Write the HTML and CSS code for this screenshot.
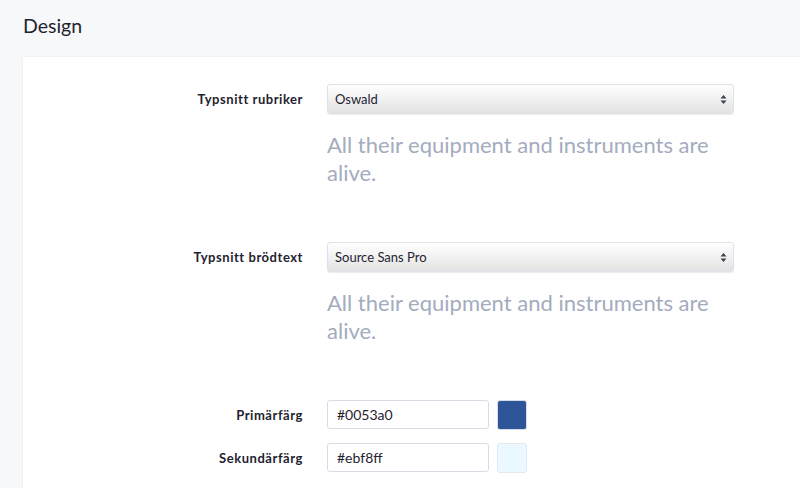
FILE: index.html
```html
<!DOCTYPE html>
<html lang="sv">
<head>
    <meta charset="UTF-8">
    <title>Design</title>
    <link rel="stylesheet" href="styles.css">
</head>
<body>
    <h1 class="page-title">Design</h1>
    <div class="card">
        <div class="form-group">
            <label class="form-label">Typsnitt rubriker</label>
            <div class="form-control">
                <div class="select">
                    <span>Oswald</span>
                    <svg class="select-arrow" width="7" height="11" viewBox="0 0 7 11"><path d="M3.5 1 L6.5 4.5 H0.5 Z M3.5 10 L6.5 6.5 H0.5 Z" fill="#3c4252"/></svg>
                </div>
                <p class="preview">All their equipment and instruments are alive.</p>
            </div>
        </div>
        <div class="form-group">
            <label class="form-label">Typsnitt brödtext</label>
            <div class="form-control">
                <div class="select">
                    <span>Source Sans Pro</span>
                    <svg class="select-arrow" width="7" height="11" viewBox="0 0 7 11"><path d="M3.5 1 L6.5 4.5 H0.5 Z M3.5 10 L6.5 6.5 H0.5 Z" fill="#3c4252"/></svg>
                </div>
                <p class="preview">All their equipment and instruments are alive.</p>
            </div>
        </div>
        <div class="color-group">
            <label class="form-label">Primärfärg</label>
            <div class="color-row">
                <div class="text-input">#0053a0</div>
                <div class="swatch" style="background-color: #2f5599;"></div>
            </div>
        </div>
        <div class="color-group">
            <label class="form-label">Sekundärfärg</label>
            <div class="color-row">
                <div class="text-input">#ebf8ff</div>
                <div class="swatch swatch-light" style="background-color: #ebf8ff;"></div>
            </div>
        </div>
    </div>
</body>
</html>
```

FILE: styles.css
```css
body {
    margin: 0;
    font-family: Lato, "Open Sans", sans-serif;
    background-color: #f7f8fa;
    color: #1f2330;
    overflow: hidden;
}

.page-title {
    font-size: 19.5px;
    font-weight: 400;
    margin: 0;
    padding: 14px 23px 0;
    height: 57px;
    line-height: 24px;
    box-sizing: border-box;
}

.card {
    margin-left: 23px;
    background-color: #fff;
    box-shadow: 0 0 2px rgba(0, 0, 0, 0.08);
    padding-top: 27px;
    min-height: 460px;
}

.form-group {
    display: grid;
    grid-template-columns: 280px 407px;
    column-gap: 24px;
    margin-bottom: 55px;
}

.form-group + .color-group {
    margin-top: 5px;
}

.form-label {
    text-align: right;
    font-size: 13px;
    font-weight: 700;
    letter-spacing: 0.55px;
    line-height: 30px;
}

.select {
    height: 30px;
    box-sizing: border-box;
    border: 1px solid #dfe2ea;
    border-radius: 3px;
    background: linear-gradient(to bottom, #ffffff, #f1f1f1 50%, #e2e2e2);
    box-shadow: 0 1px 1px rgba(0, 0, 0, 0.08);
    display: flex;
    align-items: center;
    justify-content: space-between;
    padding: 0 6px 0 7px;
    font-size: 13px;
    color: #1f2330;
}

.preview {
    margin: 17px 0 0;
    font-size: 22px;
    line-height: 28px;
    color: #a3acbe;
}

.color-group {
    display: grid;
    grid-template-columns: 280px auto;
    column-gap: 24px;
    margin-bottom: 13px;
}

.color-row {
    display: flex;
    gap: 8px;
}

.text-input {
    width: 162px;
    height: 29px;
    box-sizing: border-box;
    border: 1px solid #d6dbe6;
    border-radius: 3px;
    padding: 0 9px;
    font-size: 14px;
    line-height: 27px;
    color: #1f2330;
}

.swatch {
    width: 30px;
    height: 30px;
    box-sizing: border-box;
    border-radius: 3px;
    border: 1px solid #d6dbe6;
}

.swatch-light {
    border-color: #e3e8f0;
}
```
